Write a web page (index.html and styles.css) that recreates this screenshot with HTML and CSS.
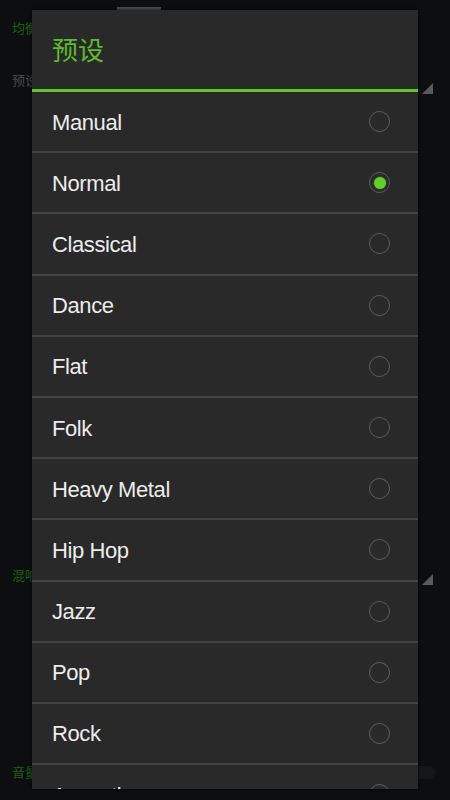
FILE: index.html
```html
<!DOCTYPE html>
<html lang="zh">
<head>
<meta charset="utf-8">
<title>预设</title>
<link rel="stylesheet" href="styles.css">
</head>
<body>
<div class="screen">
  <div class="tabbar"><span class="tab-indicator"></span></div>
  <div class="section-label">均衡器</div>
  <div class="setting-row"><span class="setting-name">预设</span><span class="spinner-corner"></span></div>
  <div class="spacer-eq"></div>
  <div class="setting-row reverb"><span class="section-label inline">混响</span><span class="spinner-corner"></span></div>
  <div class="spacer-vol"></div>
  <div class="setting-row vol"><span class="section-label inline">音量</span><span class="toggle"></span></div>
</div>

<div class="dialog">
  <div class="dialog-title">预设</div>
  <ul class="options">
    <li class="option"><span class="label">Manual</span><span class="radio"></span></li>
    <li class="option"><span class="label">Normal</span><span class="radio checked"></span></li>
    <li class="option"><span class="label">Classical</span><span class="radio"></span></li>
    <li class="option"><span class="label">Dance</span><span class="radio"></span></li>
    <li class="option"><span class="label">Flat</span><span class="radio"></span></li>
    <li class="option"><span class="label">Folk</span><span class="radio"></span></li>
    <li class="option"><span class="label">Heavy Metal</span><span class="radio"></span></li>
    <li class="option"><span class="label">Hip Hop</span><span class="radio"></span></li>
    <li class="option"><span class="label">Jazz</span><span class="radio"></span></li>
    <li class="option"><span class="label">Pop</span><span class="radio"></span></li>
    <li class="option"><span class="label">Rock</span><span class="radio"></span></li>
    <li class="option"><span class="label">Acoustic</span><span class="radio"></span></li>
  </ul>
</div>
</body>
</html>
```
FILE: styles.css
```css
html, body {
  margin: 0;
  padding: 0;
  background: #0c0e0f;
  width: 450px;
  height: 800px;
  overflow: hidden;
  font-family: "Liberation Sans", "Noto Sans CJK SC", sans-serif;
}

.screen {
  position: relative;
  height: 800px;
  padding: 0 12px;
  box-sizing: border-box;
}

.tabbar {
  height: 10px;
  display: flex;
  align-items: flex-end;
}
.tab-indicator {
  display: block;
  margin-left: 105px;
  width: 44px;
  height: 3px;
  background: #4a4a4a;
}

.section-label {
  color: #245c16;
  font-size: 13px;
  line-height: 16px;
  margin-top: 10px;
  font-family: "Noto Sans CJK SC", sans-serif;
}
.section-label.inline {
  margin-top: 0;
}

.setting-row {
  display: flex;
  align-items: center;
  justify-content: space-between;
  height: 30px;
  margin-top: 28px;
}
.setting-name {
  color: #4a4a4a;
  font-size: 13px;
  font-family: "Noto Sans CJK SC", sans-serif;
}
.spinner-corner {
  width: 0;
  height: 0;
  border-left: 11px solid transparent;
  border-bottom: 11px solid #5a5a5a;
  margin-right: 5px;
  align-self: flex-end;
}

.spacer-eq { height: 471px; }
.setting-row.reverb { margin-top: 0; height: 20px; }
.spacer-vol { height: 177px; }

.setting-row.vol { margin-top: 0; height: 20px; }
.toggle {
  width: 22px;
  height: 13px;
  border-radius: 6px;
  background: #151819;
  margin-right: 3px;
}

.dialog {
  position: absolute;
  left: 32px;
  top: 10px;
  width: 386px;
  height: 779px;
  background: #292929;
  overflow: hidden;
  box-shadow: 0 0 3px rgba(0, 0, 0, 0.8);
}

.dialog-title {
  height: 82px;
  padding-left: 20px;
  display: flex;
  align-items: center;
  color: #5dbb2c;
  font-size: 26px;
  font-family: "Noto Sans CJK SC", sans-serif;
  box-sizing: border-box;
  padding-bottom: 2px;
  border-bottom: 3px solid #5fc42a;
}

.options {
  list-style: none;
  margin: 0;
  padding: 0;
}

.option {
  height: 59.2px;
  border-bottom: 2px solid #434343;
  display: flex;
  align-items: center;
  justify-content: space-between;
  padding: 0 28px 0 20px;
}

.label {
  color: #ececec;
  font-size: 22px;
  letter-spacing: -0.4px;
  padding-top: 2px;
}

.radio {
  width: 19px;
  height: 19px;
  border: 1.5px solid #5e5e5e;
  border-radius: 50%;
  display: flex;
  align-items: center;
  justify-content: center;
}
.radio.checked::after {
  content: "";
  width: 12px;
  height: 12px;
  border-radius: 50%;
  background: #5fd12e;
  box-shadow: 0 0 2px rgba(95, 209, 46, 0.5);
}
```
